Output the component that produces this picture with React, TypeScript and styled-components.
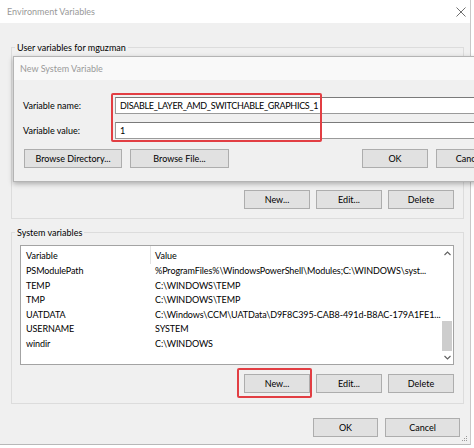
import React from "react";
import styled, { createGlobalStyle } from "styled-components";

const GlobalStyle = createGlobalStyle`
  *, *::before, *::after { box-sizing: border-box; }
  html, body { margin: 0; padding: 0; background: #ffffff; }
  body {
    width: 474px; height: 448px; overflow: hidden;
    font-family: Lato, "Open Sans", sans-serif;
    font-size: 9px; color: #000;
  }
`;

const Window = styled.div`
  position: relative;
  width: 471px;
  height: 445px;
  background: #f0f0f0;
  border-right: 1px solid #c8c8c8;
  border-bottom: 1px solid #b8b8b8;
  display: flex;
  flex-direction: column;
`;

const TitleBar = styled.div`
  flex: none;
  height: 23px;
  background: #ffffff;
  display: flex;
  align-items: center;
  justify-content: space-between;
  padding: 0 4px 0 7px;
  color: #999999;
`;

const Content = styled.div`
  flex: 1;
  display: flex;
  flex-direction: column;
  padding: 18px 6px 0 11px;
`;

const Group = styled.fieldset<{ $top: number; $bottom: number }>`
  margin: 0;
  min-width: 0;
  flex: none;
  border: 1px solid #dcdcdc;
  padding: ${(p) => p.$top}px 9px ${(p) => p.$bottom}px 8px;
  & + & { margin-top: 7px; }
`;

const Legend = styled.legend`
  padding: 0 2px;
  margin-left: -5px;
  line-height: 13px;
  height: 13px;
`;

const ListBox = styled.div<{ $h: number }>`
  height: ${(p) => p.$h}px;
  background: #ffffff;
  border: 1px solid #a3a3a3;
  display: flex;
  overflow: hidden;
`;

const Table = styled.div`
  flex: 1;
  min-width: 0;
  overflow: hidden;
  display: flex;
  flex-direction: column;
`;

const HeaderRow = styled.div`
  display: flex;
  height: 18px;
  flex: none;
`;

const HeaderCell = styled.div<{ $first?: boolean }>`
  display: flex;
  align-items: center;
  width: ${(p) => (p.$first ? "130px" : "auto")};
  flex: ${(p) => (p.$first ? "none" : "1")};
  padding-left: ${(p) => (p.$first ? "5px" : "4px")};
  border-right: ${(p) => (p.$first ? "1px solid #e3e3e3" : "none")};
`;

const Row = styled.div`
  display: flex;
  height: 14.5px;
  line-height: 14.5px;
  flex: none;
  letter-spacing: -0.08px;
`;

const Cell = styled.div<{ $first?: boolean }>`
  width: ${(p) => (p.$first ? "130px" : "auto")};
  flex: ${(p) => (p.$first ? "none" : "1")};
  min-width: 0;
  padding-left: ${(p) => (p.$first ? "5px" : "4px")};
  white-space: nowrap;
  overflow: hidden;
`;

const ScrollBar = styled.div`
  flex: none;
  width: 12px;
  display: flex;
  flex-direction: column;
  background: #ffffff;
`;

const ScrollArrow = styled.div<{ $h: number }>`
  height: ${(p) => p.$h}px;
  display: flex;
  align-items: center;
  justify-content: center;
`;

const ScrollTrack = styled.div`
  flex: 1;
  display: flex;
  flex-direction: column;
  justify-content: flex-end;
`;

const Thumb = styled.div`
  height: 30px;
  margin: 0 1px;
  background: #cdcdcd;
`;

const ButtonRow = styled.div`
  display: flex;
  justify-content: flex-end;
  gap: 6px;
  margin-top: 9px;
`;

const Button = styled.button<{ $w?: number }>`
  width: ${(p) => p.$w ?? 66}px;
  height: 19px;
  margin: 0;
  padding: 0;
  background: #e1e1e1;
  border: 1px solid #adadad;
  font: inherit;
  color: #000;
  line-height: 17px;
  text-align: center;
  white-space: nowrap;
`;

const Footer = styled.div`
  flex: none;
  display: flex;
  justify-content: flex-end;
  gap: 7px;
  margin-top: 14px;
  padding-right: 4px;
`;

const Dialog = styled.div`
  position: absolute;
  left: 13px;
  top: 56px;
  width: 500px;
  height: 126px;
  background: #f0f0f0;
  border: 1px solid #b4b4b4;
  box-shadow: 0 2px 5px rgba(0, 0, 0, 0.28);
  display: flex;
  flex-direction: column;
  z-index: 2;
`;

const DialogTitle = styled.div`
  flex: none;
  height: 23px;
  background: #f9f9f9;
  color: #999999;
  padding-left: 6px;
  display: flex;
  align-items: center;
`;

const DialogBody = styled.div`
  flex: 1;
  display: grid;
  grid-template-columns: 92px 1fr;
  grid-auto-rows: 17px;
  row-gap: 8px;
  align-items: center;
  padding: 17px 10px 10px 9px;
`;

const FieldLabel = styled.label`
  white-space: nowrap;
`;

const Field = styled.input`
  height: 17px;
  width: 100%;
  margin: 0;
  padding: 0 3px 0 4px;
  border: 1px solid #9a9a9a;
  border-top-color: #7a7a7a;
  background: #ffffff;
  font: inherit;
  letter-spacing: -0.3px;
  color: #000;
  outline: none;
`;

const DialogButtons = styled.div`
  grid-column: 1 / -1;
  display: flex;
  justify-content: space-between;
  margin-top: 5px;
  padding-left: 1px;
  height: 19px;
`;

const ButtonGroup = styled.div`
  display: flex;
  gap: 8px;
`;

const Highlight = styled.div<{ $x: number; $y: number; $w: number; $h: number }>`
  position: absolute;
  left: ${(p) => p.$x}px;
  top: ${(p) => p.$y}px;
  width: ${(p) => p.$w}px;
  height: ${(p) => p.$h}px;
  border: 2px solid #e23e43;
  border-radius: 2px;
  z-index: 3;
  pointer-events: none;
`;

const Grip = styled.svg`
  position: absolute;
  right: 2px;
  bottom: 2px;
`;

const CloseIcon = () => (
  <svg width="10" height="10" viewBox="0 0 10 10">
    <path d="M0.5 0.5 L9.5 9.5 M9.5 0.5 L0.5 9.5" stroke="#6f6f6f" strokeWidth="1" fill="none" />
  </svg>
);

const Chevron = ({ up }: { up?: boolean }) => (
  <svg width="7" height="5" viewBox="0 0 7 5">
    <path
      d={up ? "M0.5 4 L3.5 1 L6.5 4" : "M0.5 1 L3.5 4 L6.5 1"}
      stroke="#606060"
      strokeWidth="1.1"
      fill="none"
    />
  </svg>
);

const rows: [string, string][] = [
  ["PSModulePath", String.raw`%ProgramFiles%\WindowsPowerShell\Modules;C:\WINDOWS\syst...`],
  ["TEMP", String.raw`C:\WINDOWS\TEMP`],
  ["TMP", String.raw`C:\WINDOWS\TEMP`],
  ["UATDATA", String.raw`C:\Windows\CCM\UATData\D9F8C395-CAB8-491d-B8AC-179A1FE1...`],
  ["USERNAME", "SYSTEM"],
  ["windir", String.raw`C:\WINDOWS`],
];

export default function App() {
  return (
    <>
      <GlobalStyle />
      <Window>
        <TitleBar>
          <span>Environment Variables</span>
          <CloseIcon />
        </TitleBar>
        <Content>
          <Group $top={4} $bottom={9}>
            <Legend>User variables for mguzman</Legend>
            <ListBox $h={123} />
            <ButtonRow>
              <Button>New...</Button>
              <Button>Edit...</Button>
              <Button>Delete</Button>
            </ButtonRow>
          </Group>
          <Group $top={6} $bottom={10}>
            <Legend>System variables</Legend>
            <ListBox $h={120}>
              <Table>
                <HeaderRow>
                  <HeaderCell $first>Variable</HeaderCell>
                  <HeaderCell>Value</HeaderCell>
                </HeaderRow>
                {rows.map(([name, value]) => (
                  <Row key={name}>
                    <Cell $first>{name}</Cell>
                    <Cell>{value}</Cell>
                  </Row>
                ))}
              </Table>
              <ScrollBar>
                <ScrollArrow $h={14}>
                  <Chevron up />
                </ScrollArrow>
                <ScrollTrack>
                  <Thumb />
                </ScrollTrack>
                <ScrollArrow $h={13}>
                  <Chevron />
                </ScrollArrow>
              </ScrollBar>
            </ListBox>
            <ButtonRow>
              <Button>New...</Button>
              <Button>Edit...</Button>
              <Button>Delete</Button>
            </ButtonRow>
          </Group>
          <Footer>
            <Button $w={65}>OK</Button>
            <Button $w={75}>Cancel</Button>
          </Footer>
        </Content>

        <Dialog>
          <DialogTitle>New System Variable</DialogTitle>
          <DialogBody>
            <FieldLabel>Variable name:</FieldLabel>
            <Field readOnly defaultValue="DISABLE_LAYER_AMD_SWITCHABLE_GRAPHICS_1" />
            <FieldLabel>Variable value:</FieldLabel>
            <Field readOnly defaultValue="1" />
            <DialogButtons>
              <ButtonGroup>
                <Button $w={98}>Browse Directory...</Button>
                <Button $w={99}>Browse File...</Button>
              </ButtonGroup>
              <ButtonGroup>
                <Button>OK</Button>
                <Button>Cancel</Button>
              </ButtonGroup>
            </DialogButtons>
          </DialogBody>
        </Dialog>

        <Highlight $x={111} $y={93} $w={211} $h={49} />
        <Highlight $x={237} $y={368} $w={75} $h={30} />

        <Grip width="6" height="6" viewBox="0 0 6 6">
          <rect x="4" y="0" width="1" height="1" fill="#9a9a9a" />
          <rect x="2" y="2" width="1" height="1" fill="#9a9a9a" />
          <rect x="4" y="2" width="1" height="1" fill="#9a9a9a" />
          <rect x="0" y="4" width="1" height="1" fill="#9a9a9a" />
          <rect x="2" y="4" width="1" height="1" fill="#9a9a9a" />
          <rect x="4" y="4" width="1" height="1" fill="#9a9a9a" />
        </Grip>
      </Window>
    </>
  );
}
